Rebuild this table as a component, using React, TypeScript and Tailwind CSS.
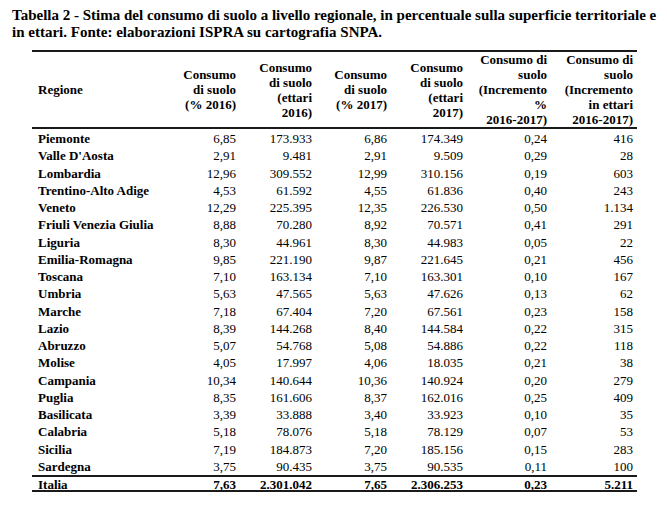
const rows: [string, string, string, string, string, string, string][] = [
  ['Piemonte', '6,85', '173.933', '6,86', '174.349', '0,24', '416'],
  ["Valle D'Aosta", '2,91', '9.481', '2,91', '9.509', '0,29', '28'],
  ['Lombardia', '12,96', '309.552', '12,99', '310.156', '0,19', '603'],
  ['Trentino-Alto Adige', '4,53', '61.592', '4,55', '61.836', '0,40', '243'],
  ['Veneto', '12,29', '225.395', '12,35', '226.530', '0,50', '1.134'],
  ['Friuli Venezia Giulia', '8,88', '70.280', '8,92', '70.571', '0,41', '291'],
  ['Liguria', '8,30', '44.961', '8,30', '44.983', '0,05', '22'],
  ['Emilia-Romagna', '9,85', '221.190', '9,87', '221.645', '0,21', '456'],
  ['Toscana', '7,10', '163.134', '7,10', '163.301', '0,10', '167'],
  ['Umbria', '5,63', '47.565', '5,63', '47.626', '0,13', '62'],
  ['Marche', '7,18', '67.404', '7,20', '67.561', '0,23', '158'],
  ['Lazio', '8,39', '144.268', '8,40', '144.584', '0,22', '315'],
  ['Abruzzo', '5,07', '54.768', '5,08', '54.886', '0,22', '118'],
  ['Molise', '4,05', '17.997', '4,06', '18.035', '0,21', '38'],
  ['Campania', '10,34', '140.644', '10,36', '140.924', '0,20', '279'],
  ['Puglia', '8,35', '161.606', '8,37', '162.016', '0,25', '409'],
  ['Basilicata', '3,39', '33.888', '3,40', '33.923', '0,10', '35'],
  ['Calabria', '5,18', '78.076', '5,18', '78.129', '0,07', '53'],
  ['Sicilia', '7,19', '184.873', '7,20', '185.156', '0,15', '283'],
  ['Sardegna', '3,75', '90.435', '3,75', '90.535', '0,11', '100'],
]

const total = ['Italia', '7,63', '2.301.042', '7,65', '2.306.253', '0,23', '5.211']

const headers: string[][] = [
  ['Consumo', 'di suolo', '(% 2016)'],
  ['Consumo', 'di suolo', '(ettari', '2016)'],
  ['Consumo', 'di suolo', '(% 2017)'],
  ['Consumo', 'di suolo', '(ettari', '2017)'],
  ['Consumo di', 'suolo', '(Incremento', '%', '2016-2017)'],
  ['Consumo di', 'suolo', '(Incremento', 'in ettari', '2016-2017)'],
]

const gridCols = 'grid grid-cols-[148px_60px_76px_75px_76px_84px_86px]'

function App() {
  return (
    <div className="h-[510px] w-[667px] bg-white text-black [font-family:'Liberation_Serif','Times_New_Roman',serif]">
      <h1 className="px-3 pt-[7px] text-[15px] leading-[17px] font-bold whitespace-nowrap">
        Tabella 2 - Stima del consumo di suolo a livello regionale, in percentuale sulla superficie territoriale e
        <br />
        in ettari. Fonte: elaborazioni ISPRA su cartografia SNPA.
      </h1>

      <div className="mt-[9px] ml-8 w-[605px] border-t-2 border-[#1a1a1a] text-[13px]">
        {/* header */}
        <div className={`${gridCols} h-[77px] items-center border-b-2 border-[#1a1a1a] font-bold leading-[15px]`}>
          <div className="pl-[6px]">Regione</div>
          {headers.map((lines, i) => (
            <div key={i} className="pr-1 text-right">
              {lines.map((line) => (
                <div key={line}>{line}</div>
              ))}
            </div>
          ))}
        </div>

        {/* body */}
        <div className="pt-[1px]">
          {rows.map((row) => (
            <div key={row[0]} className={`${gridCols} h-[17.25px] items-center leading-[17px]`}>
              <div className="pl-[6px] font-bold whitespace-nowrap">{row[0]}</div>
              {row.slice(1).map((value, i) => (
                <div key={i} className="pr-1 text-right">
                  {value}
                </div>
              ))}
            </div>
          ))}
        </div>

        {/* totale */}
        <div className={`${gridCols} h-[17px] items-center border-y-2 border-[#1a1a1a] font-bold leading-[15px]`}>
          <div className="pl-[6px]">{total[0]}</div>
          {total.slice(1).map((value, i) => (
            <div key={i} className="pr-1 text-right">
              {value}
            </div>
          ))}
        </div>
      </div>
    </div>
  )
}

export default App
